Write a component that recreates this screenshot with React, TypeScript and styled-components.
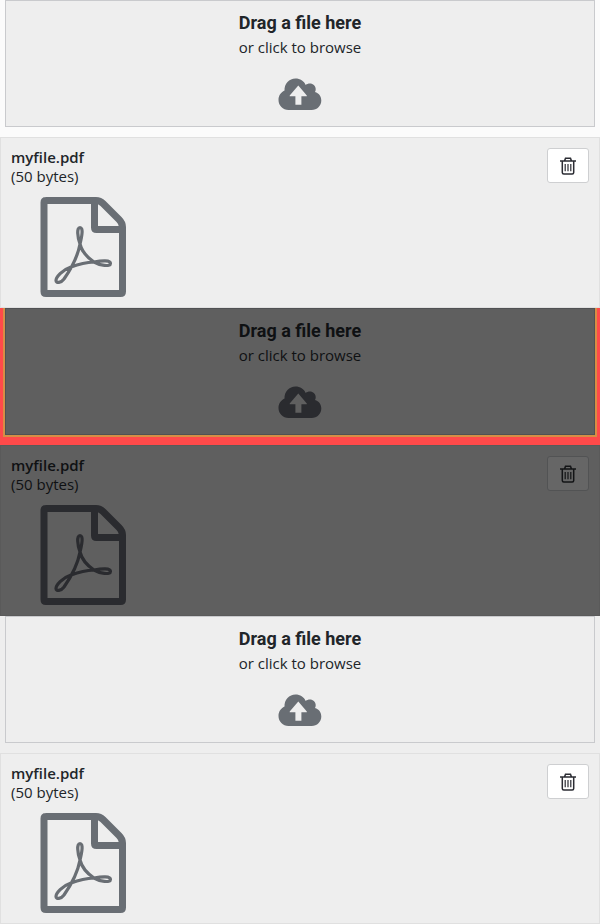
import React from "react";
import styled, { createGlobalStyle, ThemeProvider } from "styled-components";

const GlobalStyle = createGlobalStyle`
  *, *::before, *::after { box-sizing: border-box; }
  body {
    margin: 0;
    background: #eeeeee;
    font-family: "Open Sans", "Noto Sans", sans-serif;
    font-size: 15px;
    line-height: 19px;
  }
`;

const light = {
  panel: "#eeeeee",
  text: "#212529",
  icon: "#696e74",
  dropBorder: "#c9cacd",
  cardBorder: "#e0e0e0",
  button: "#ffffff",
  buttonBorder: "#cecfd1",
  trash: "#2b2c33",
  gutter: "#fbfbfb",
  ring: "transparent",
};

const themes = {
  plain: light,
  diff: {
    panel: "#5f5f5f",
    text: "#0f1113",
    icon: "#2a2b2f",
    dropBorder: "#505153",
    cardBorder: "#5a5a5a",
    button: "#666666",
    buttonBorder: "#525354",
    trash: "#131416",
    gutter: "#ff4a4a",
    ring: "#d68e45",
  },
  muted: { ...light, gutter: "#eeeeee" },
};

const Section = styled.section`
  display: flex;
  flex-direction: column;
  color: ${({ theme }) => theme.text};
  background: ${({ theme }) => theme.gutter};
`;

const DropArea = styled.div`
  display: flex;
  padding: 0 5px 10px;
  overflow: hidden;
`;

const DropZone = styled.button`
  flex: 1;
  display: flex;
  flex-direction: column;
  align-items: center;
  margin: 0;
  padding: 8px 10px 16px;
  border: 1px solid ${({ theme }) => theme.dropBorder};
  box-shadow: 0 0 0 2px ${({ theme }) => theme.ring};
  background: ${({ theme }) => theme.panel};
  color: inherit;
  font: inherit;
  cursor: pointer;
`;

const DropTitle = styled.strong`
  margin-bottom: 1px;
  font-family: Roboto, "Open Sans", sans-serif;
  font-size: 18px;
  line-height: 28px;
  font-weight: 700;
`;

const CloudIcon = styled.svg`
  width: 44px;
  height: 32px;
  margin-top: 21px;
  fill: ${({ theme }) => theme.icon};
`;

const FileCard = styled.article`
  display: flex;
  justify-content: space-between;
  align-items: flex-start;
  padding: 10px;
  border: 1px solid ${({ theme }) => theme.cardBorder};
  background: ${({ theme }) => theme.panel};
`;

const FileInfo = styled.div`
  display: flex;
  flex-direction: column;
`;

const FileName = styled.strong`
  font-weight: 600;
`;

const PdfIcon = styled.svg`
  width: 86px;
  height: 100px;
  margin: 11px 0 0 29px;
  fill: none;
  stroke: ${({ theme }) => theme.icon};
`;

const DeleteButton = styled.button`
  display: flex;
  align-items: center;
  justify-content: center;
  width: 42px;
  height: 35px;
  padding: 0;
  border: 1px solid ${({ theme }) => theme.buttonBorder};
  border-radius: 3px;
  background: ${({ theme }) => theme.button};
  color: ${({ theme }) => theme.trash};
  cursor: pointer;
`;

const TrashIcon = styled.svg`
  width: 16px;
  height: 18px;
  fill: none;
  stroke: currentColor;
`;

function Uploader({ variant }: { variant: keyof typeof themes }) {
  const theme = themes[variant];
  return (
    <ThemeProvider theme={theme}>
      <Section>
        <DropArea>
          <DropZone type="button">
            <DropTitle>Drag a file here</DropTitle>
            <span>or click to browse</span>
            <CloudIcon viewBox="0 0 44 32" aria-hidden="true">
              <path
                fillRule="evenodd"
                d="M10.500 32C4.900 32 0.500 27.500 0.500 22C0.500 17.800 2.800 14.400 6.500 12.600C6.200 5.800 11.200 0.500 17.500 0.500C22.100 0.500 26 3 27.700 7C28.800 6 30.200 5.500 31.800 5.500C35.200 5.500 37.700 8 37.700 11.300C37.700 12.300 37.500 13.200 37 14.100C40.800 15.200 43.300 18.500 43.300 22.500C43.300 27.800 39 32 33.700 32ZM20.300 7.500L11.700 17.500V18.200H17.400V26.700H23.400V18.200H28.800V17.500Z"
              />
            </CloudIcon>
          </DropZone>
        </DropArea>
        <FileCard>
          <FileInfo>
            <FileName>myfile.pdf</FileName>
            <span>(50 bytes)</span>
            <PdfIcon viewBox="0 0 86 100" aria-hidden="true">
              <path
                strokeWidth="7"
                strokeLinejoin="round"
                d="M5.500 3.500H56C59 3.500 61 4.500 63 6.500L79 22.500C81.500 25 82.500 27 82.500 30V94.500Q82.500 96.500 80.500 96.500H6Q4 96.500 4 94.500V5.500Q4 3.500 6 3.500M54.500 4V30.500Q54.500 32.500 56.500 32.500H82"
              />
              <path
                strokeWidth="3.200"
                d="M40 30.500C36.500 30.500 37.500 40 40 47C42 55 48 61 54 65C60 68.500 70.500 70 70.500 66.500C70.500 63 62 63.500 54 65C46 65.500 38 67.500 31 70C22 73 16 80 16 83.500C16 86.500 21 86 24 82C31 72 38 58 40 47C42 39 43.500 30.500 40 30.500Z"
              />
            </PdfIcon>
          </FileInfo>
          <DeleteButton type="button" aria-label="Delete myfile.pdf">
            <TrashIcon viewBox="0 0 16 18" aria-hidden="true">
              <path strokeWidth="1.500" d="M0 4H16M4.500 4L5.500 1.300H10.500L11.500 4M2.300 4V15.500Q2.300 17 3.800 17H12.200Q13.700 17 13.700 15.500V4" />
              <path strokeWidth="1.200" d="M5.200 7V14.200M8 7V14.200M10.800 7V14.200" />
            </TrashIcon>
          </DeleteButton>
        </FileCard>
      </Section>
    </ThemeProvider>
  );
}

export default function App() {
  return (
    <main>
      <GlobalStyle />
      <Uploader variant="plain" />
      <Uploader variant="diff" />
      <Uploader variant="muted" />
    </main>
  );
}
